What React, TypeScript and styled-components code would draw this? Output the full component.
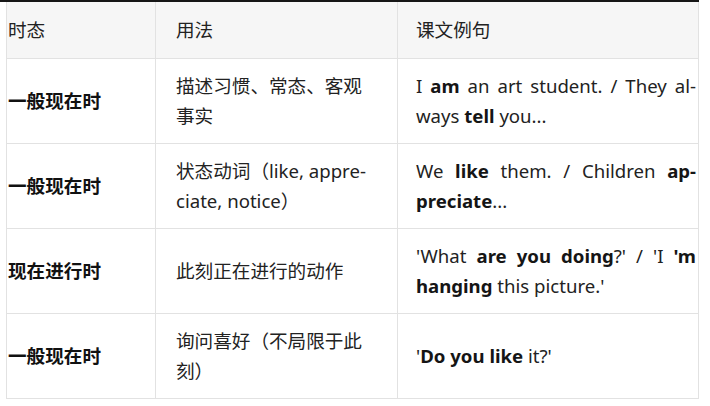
import React from "react";
import styled, { createGlobalStyle } from "styled-components";

const GlobalStyle = createGlobalStyle`
    html, body {
        margin: 0;
        padding: 0;
        background: #ffffff;
    }
    body {
        font-family: "Noto Sans", "Noto Sans CJK SC", sans-serif;
        color: #222222;
    }
`;

const Page = styled.div`
    width: 699px;
    border-top: 2px solid #161616;
`;

const Grid = styled.div`
    display: grid;
    grid-template-columns: 149px 242px 301px;
    margin-left: 6px;
    width: 693px;
    border-left: 1px solid #e2e2e2;
`;

interface ICellProps {
    $col: number;
    $head?: boolean;
}

const PADDINGS = ["0 1px", "0 21px 0 20px", "0 2px 0 18px"];

const Cell = styled.div<ICellProps>`
    display: flex;
    align-items: center;
    box-sizing: border-box;
    height: ${({ $head }) => ($head ? 57 : 85)}px;
    padding: ${({ $col }) => PADDINGS[$col]};
    border-right: 1px solid #e2e2e2;
    border-bottom: 1px solid #e2e2e2;
    background: ${({ $head }) => ($head ? "#f6f6f6" : "#ffffff")};
    font-size: 18.6px;
    line-height: 30px;
    font-weight: ${({ $col, $head }) => ($col === 0 && !$head ? 700 : 400)};
    color: ${({ $col, $head }) => ($col === 0 && !$head ? "#111111" : "#222222")};
    white-space: nowrap;
`;

const Text = styled.p<{ $justify?: boolean }>`
    margin: 0;
    width: 100%;
    white-space: normal;
    text-align: ${({ $justify }) => ($justify ? "justify" : "left")};
    line-break: strict;

    b {
        font-weight: 700;
        color: #151515;
    }
`;

interface IRow {
    tense: string;
    usage: React.ReactNode;
    example: React.ReactNode;
}

const ROWS: IRow[] = [
    {
        tense: "一般现在时",
        usage: "描述习惯、常态、客观事实",
        example: (
            <>
                I <b>am</b> an art student. / They al{"\u00AD"}ways <b>tell</b> you...
            </>
        ),
    },
    {
        tense: "一般现在时",
        usage: <>状态动词（like, appre{"\u00AD"}ciate, notice）</>,
        example: (
            <>
                We <b>like</b> them. / Children <b>ap{"\u00AD"}preciate</b>...
            </>
        ),
    },
    {
        tense: "现在进行时",
        usage: "此刻正在进行的动作",
        example: (
            <>
                'What <b>are you doing</b>?' / 'I <b>'m hanging</b> this picture.'
            </>
        ),
    },
    {
        tense: "一般现在时",
        usage: "询问喜好（不局限于此刻）",
        example: (
            <>
                '<b>Do you like</b> it?'
            </>
        ),
    },
];

const App = () => {
    return (
        <Page>
            <GlobalStyle />
            <Grid>
                <Cell $col={0} $head>时态</Cell>
                <Cell $col={1} $head>用法</Cell>
                <Cell $col={2} $head>课文例句</Cell>
                {ROWS.map((row, i) => (
                    <React.Fragment key={i}>
                        <Cell $col={0}>{row.tense}</Cell>
                        <Cell $col={1}>
                            <Text>{row.usage}</Text>
                        </Cell>
                        <Cell $col={2}>
                            <Text $justify>{row.example}</Text>
                        </Cell>
                    </React.Fragment>
                ))}
            </Grid>
        </Page>
    );
};

export default App;
